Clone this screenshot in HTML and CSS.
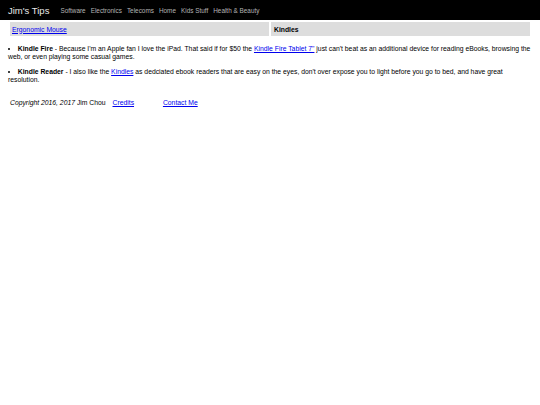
FILE: index.html
```html
<!DOCTYPE html>
<html>
<head>
<meta charset="utf-8">
<link rel="stylesheet" href="styles.css">
</head>
<body>
<div class="header">
  <span class="brand">Jim's Tips</span>
  <nav class="nav">
    <a href="#">Software</a>
    <a href="#">Electronics</a>
    <a href="#">Telecoms</a>
    <a href="#">Home</a>
    <a href="#">Kids Stuff</a>
    <a href="#">Health &amp; Beauty</a>
  </nav>
</div>
<div class="main">
  <table class="tabs">
    <tr>
      <td class="tab"><a href="#">Ergonomic Mouse</a></td>
      <td class="tab active">Kindles</td>
    </tr>
  </table>
  <ul class="items">
    <li><b>Kindle Fire</b> - Because I'm an Apple fan I love the iPad. That said if for $50 the <a href="#">Kindle Fire Tablet 7"</a> just can't beat as an additional device for reading eBooks, browsing the web, or even playing some casual games.</li>
    <li><b>Kindle Reader</b> - I also like the <a href="#">Kindles</a> as dedciated ebook readers that are easy on the eyes, don't over expose you to light before you go to bed, and have great resolution.</li>
  </ul>
  <div class="footer">
    <span class="copy"><i>Copyright 2016, 2017</i> Jim Chou</span>
    <a class="credits" href="#">Credits</a>
    <a class="contact" href="#">Contact Me</a>
  </div>
</div>
</body>
</html>
```
FILE: styles.css
```css
html, body {
  margin: 0;
  padding: 0;
  background: #fff;
  font-family: "Liberation Sans", Arial, sans-serif;
  color: #000;
}
.header {
  background: #000;
  height: 20px;
  display: flex;
  align-items: center;
  padding-left: 8px;
}
.brand {
  color: #e8e8e8;
  font-size: 9.5px;
  margin-right: 11px;
}
.nav {
  display: flex;
  gap: 5px;
}
.nav a {
  color: #b4b4b4;
  font-size: 6.4px;
  text-decoration: none;
}
.main {
  padding: 0 8px;
}
.tabs {
  width: 100%;
  border-spacing: 2px;
  margin-top: 0;
  font-size: 6.8px;
}
.tab {
  background: #ddd;
  height: 14px;
  padding: 0 2px;
  width: 50%;
}
.tab a { color: #00e; }
.tab.active { font-weight: bold; padding-left: 3px; }
.items {
  list-style: disc inside;
  padding: 0;
  margin: 7px 0 0;
  font-size: 6.8px;
  line-height: 8px;
}
.items li { margin-bottom: 7px; }
.items a { color: #00e; }
.footer {
  font-size: 6.8px;
  line-height: 8px;
  padding-left: 2px;
  margin-top: 15px;
}
.footer a { color: #00e; text-decoration: underline; }
.credits { margin-left: 5px; }
.contact { margin-left: 27px; }
```
